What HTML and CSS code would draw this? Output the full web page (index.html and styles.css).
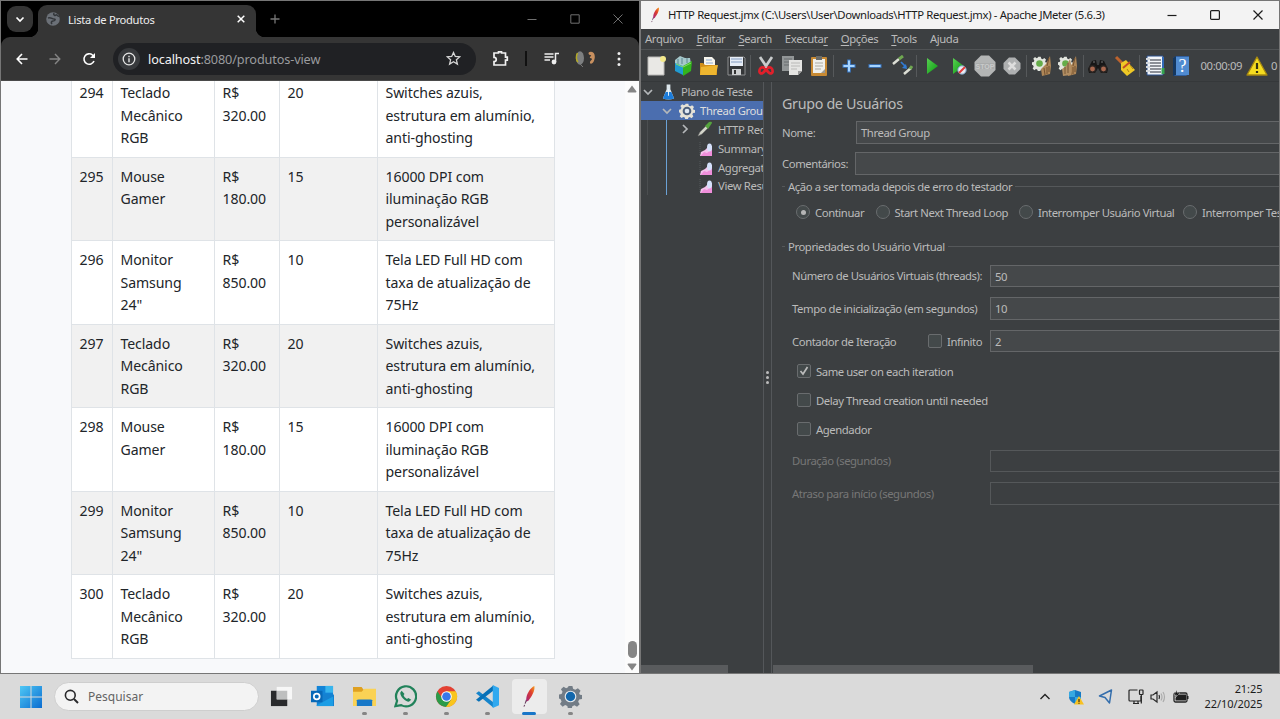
FILE: index.html
```html
<!DOCTYPE html>
<html lang="pt-BR">
<head>
<meta charset="utf-8">
<title>Lista de Produtos</title>
<link rel="stylesheet" href="styles.css">
</head>
<body>
<svg class="defs" width="0" height="0" aria-hidden="true">
  <defs>
    <linearGradient id="gWin" x1="0" y1="0" x2="1" y2="1"><stop offset="0" stop-color="#4fc8f5"/><stop offset="1" stop-color="#0a6cd0"/></linearGradient>
    <linearGradient id="gPlay" x1="0" y1="0" x2="1" y2="1"><stop offset="0" stop-color="#58d052"/><stop offset="1" stop-color="#0a9a10"/></linearGradient>
    <linearGradient id="gFeather" x1="1" y1="0" x2="0" y2="1"><stop offset="0" stop-color="#f4a020"/><stop offset=".4" stop-color="#e0402c"/><stop offset="1" stop-color="#a02080"/></linearGradient>
    <symbol id="feather" viewBox="0 0 20 26"><path d="M15.500 1C11 3 7.500 9 6.500 14l-.5 5 3-1.500C12 13 16.500 7 15.500 1z" fill="url(#gFeather)"/><path d="M6.500 17 5 21M4.500 22.500l-.8 2" stroke="#684060" stroke-width="1.200"/></symbol>
    <symbol id="gear" viewBox="0 0 24 24"><path d="M10 1h4l.7 3 2.300 1 2.700-1.700 2.800 2.800L21 8.500l.8 1.700 2.200.3v4l-3 .6-1 2.300 1.600 2.600-2.800 2.800-2.600-1.700-2.300 1-.6 2.400h-4l-.6-2.600-2.300-1-2.600 1.700L1 19.800l1.700-2.600-1-2.300L0 14v-4l2.700-.6 1-2.300L2 4.500l2.800-2.800 2.600 1.700 2-1z"/></symbol>
    <symbol id="graph" viewBox="0 0 14 15"><path d="M1 0v14" stroke="#555a5d" stroke-dasharray="1 1"/><path d="M1 14l1-4 4-2 4-4 3 0v10z" fill="#f3c4ec"/><path d="M1.500 14 5 10l3 1 5-4v7z" fill="#f08fdb"/><ellipse cx="10.500" cy="5.500" rx="2.500" ry="4" fill="#d5e1fb"/></symbol>
    <symbol id="broomgear" viewBox="0 0 22 22"><use href="#gear" x="1" y="1" width="15" height="15" fill="#e3e6df"/><circle cx="8.500" cy="8.500" r="3.300" fill="#65ad49"/><path d="M19 1 15 9l-5 5 1 7 8-2 1-8z" fill="#ae8657"/><path d="M18 3l-2 8m-3 2 1 7m2-8v7m2-8v6" stroke="#725131" fill="none"/></symbol>
  </defs>
</svg>

<main class="desktop">
  <section class="window browser">
    <header class="tabstrip">
      <div class="tab-search"><svg width="10" height="7" viewBox="0 0 10 7"><path d="M1.500 1.500 5 5l3.500-3.500" fill="none" stroke="#fff" stroke-width="1.700"/></svg></div>
      <div class="tab">
        <svg width="14" height="14" viewBox="0 0 14 14"><circle cx="7" cy="7" r="6.800" fill="#6b7077"/><path d="M2 6c3-1 4 1 6 1s1 2-1 2-2 2-1 3M8 1c-1 2 1 3 2 2s2 2 3 1" fill="none" stroke="#34373b" stroke-width="1.600"/></svg>
        <span class="tab-title">Lista de Produtos</span>
        <svg width="8" height="8" viewBox="0 0 8 8"><path d="M.7.700l6.600 6.600M7.300.7.700 7.300" stroke="#fff" stroke-width="1.500"/></svg>
      </div>
      <svg class="newtab" width="10" height="10" viewBox="0 0 10 10"><path d="M5 .5v9M.5 5h9" stroke="#777" stroke-width="1.300"/></svg>
      <div class="caption dim">
        <svg width="10" height="10" viewBox="0 0 10 10"><path d="M.5 5.500h9"/></svg>
        <svg width="10" height="10" viewBox="0 0 10 10"><path d="M.8.800h8.400v8.400H.8z"/></svg>
        <svg width="10" height="10" viewBox="0 0 10 10"><path d="m.5.500 9 9m0-9-9 9"/></svg>
      </div>
    </header>
    <div class="navbar">
      <svg width="12" height="12" viewBox="0 0 12 12"><path d="M11.500 6H1.500M6 1 1.200 6 6 11" fill="none" stroke="#fff" stroke-width="1.600"/></svg>
      <svg width="12" height="12" viewBox="0 0 12 12"><path d="M.5 6h10M6 1l4.800 5L6 11" fill="none" stroke="#858585" stroke-width="1.400"/></svg>
      <svg width="14" height="14" viewBox="0 0 14 14"><path d="M12 9A5.200 5.200 0 1 1 10.500 3l2 2" fill="none" stroke="#fff" stroke-width="1.600"/><path d="M13 1v5H8z" fill="#fff"/></svg>
      <div class="address">
        <span class="site-info"><svg width="14" height="14" viewBox="0 0 14 14"><circle cx="7" cy="7" r="5.800" fill="none" stroke="#e5e5e5" stroke-width="1.300"/><path d="M7 6.200v4M7 3.800v1.400" stroke="#e5e5e5" stroke-width="1.400"/></svg></span>
        <span class="url"><b>localhost</b>:8080/produtos-view</span>
        <svg width="15" height="15" viewBox="0 0 15 15"><path d="m7.500 1.500 1.800 4 4.400.4-3.300 2.900 1 4.300-3.900-2.300-3.900 2.300 1-4.300L1.300 5.900l4.400-.4z" fill="none" stroke="#d5d5d5" stroke-width="1.300"/></svg>
      </div>
      <div class="extensions">
        <svg width="17" height="17" viewBox="0 0 17 17"><path d="M2 3h4.500V1.800h3V3h4v4.200h1.800v3h-1.800V15H2v-3.500c3 0 3-4.200 0-4.200z" fill="none" stroke="#f1f1f1" stroke-width="1.700"/></svg>
        <i class="bar"></i>
        <svg width="15" height="13" viewBox="0 0 15 13"><path d="M.5 2h9M.5 5h9M.5 8h5.500M11.500 10V1.500H15" fill="none" stroke="#eee" stroke-width="1.500"/><circle cx="10" cy="10" r="2.400" fill="#eee"/></svg>
        <svg width="20" height="18" viewBox="0 0 20 18"><ellipse cx="5" cy="8" rx="4" ry="6.800" fill="#7d7f80"/><path d="M2.500 3C.8 6 1 10 3 12" stroke="#b4aa24" stroke-width="1.500" fill="none"/><path d="m5 14 3 3" stroke="#777"/><path d="M15 2c4-1 5.500 3 4.500 7-.5 4-4 6-4.500 4s2-3 2-4-3-.5-2-2 2-1.500 0-2-2-3 0-3z" fill="#c8905f"/></svg>
        <svg width="4" height="16" viewBox="0 0 4 16" fill="#eee"><circle cx="2" cy="2.500" r="1.500"/><circle cx="2" cy="8" r="1.500"/><circle cx="2" cy="13.500" r="1.500"/></svg>
      </div>
    </div>
    <div class="page">
      <table class="products">
        <colgroup><col class="c-id"><col class="c-name"><col class="c-price"><col class="c-qty"><col class="c-desc"></colgroup>
        <tr><td>294</td><td>Teclado<br>Mecânico<br>RGB</td><td>R$<br>320.00</td><td>20</td><td>Switches azuis,<br>estrutura em alumínio,<br>anti-ghosting</td></tr>
        <tr><td>295</td><td>Mouse<br>Gamer</td><td>R$<br>180.00</td><td>15</td><td>16000 DPI com<br>iluminação RGB<br>personalizável</td></tr>
        <tr><td>296</td><td>Monitor<br>Samsung<br>24"</td><td>R$<br>850.00</td><td>10</td><td>Tela LED Full HD com<br>taxa de atualização de<br>75Hz</td></tr>
        <tr><td>297</td><td>Teclado<br>Mecânico<br>RGB</td><td>R$<br>320.00</td><td>20</td><td>Switches azuis,<br>estrutura em alumínio,<br>anti-ghosting</td></tr>
        <tr><td>298</td><td>Mouse<br>Gamer</td><td>R$<br>180.00</td><td>15</td><td>16000 DPI com<br>iluminação RGB<br>personalizável</td></tr>
        <tr><td>299</td><td>Monitor<br>Samsung<br>24"</td><td>R$<br>850.00</td><td>10</td><td>Tela LED Full HD com<br>taxa de atualização de<br>75Hz</td></tr>
        <tr><td>300</td><td>Teclado<br>Mecânico<br>RGB</td><td>R$<br>320.00</td><td>20</td><td>Switches azuis,<br>estrutura em alumínio,<br>anti-ghosting</td></tr>
      </table>
      <div class="scrollbar">
        <svg width="10" height="8" viewBox="0 0 10 8"><path d="M5 .5 9.500 6.500Q9.500 7.500 8.500 7.500h-7Q.5 7.500.5 6.500z" fill="#858585"/></svg>
        <i class="thumb"></i>
        <svg width="10" height="8" viewBox="0 0 10 8"><path d="M5 7.500 9.500 1.500Q9.500.5 8.500.5h-7Q.5.500.5 1.500z" fill="#858585"/></svg>
      </div>
    </div>
  </section>

  <section class="window jmeter">
    <header class="titlebar">
      <svg width="13" height="16"><use href="#feather" width="13" height="16"/></svg>
      <span class="title">HTTP Request.jmx (C:\Users\User\Downloads\HTTP Request.jmx) - Apache JMeter (5.6.3)</span>
      <div class="caption">
        <svg width="10" height="10" viewBox="0 0 10 10"><path d="M.5 5.500h9"/></svg>
        <svg width="10" height="10" viewBox="0 0 10 10"><rect x=".6" y=".6" width="8.800" height="8.800" rx="1"/></svg>
        <svg width="10" height="10" viewBox="0 0 10 10"><path d="m.5.500 9 9m0-9-9 9"/></svg>
      </div>
    </header>
    <nav class="menu"><span>Arquivo</span><span><u>E</u>ditar</span><span><u>S</u>earch</span><span>Executa<u>r</u></span><span><u>O</u>pções</span><span><u>T</u>ools</span><span>Ajuda</span></nav>
    <div class="toolbar">
      <svg viewBox="0 0 22 22"><path d="M3 2h16v18H3z" fill="#e9e8e5" stroke="#b9b9b7"/><circle cx="18" cy="4" r="3" fill="#f3e98b"/></svg>
      <svg viewBox="0 0 22 22"><path d="m3 5 5-4 5 2 5 0 1 6-8 4-8-4z" fill="#a6c8cb"/><path d="M6 4v5m4-6v6m5-6v5" stroke="#5c8590"/><path d="m3 8 8 3v9l-8-4z" fill="#219bd2"/><path d="m11 11 9-5-1 10-8 5z" fill="#33b51d"/><path d="m4 9 7 3 8-4" stroke="#87de62" fill="none"/></svg>
      <svg viewBox="0 0 22 22"><path d="M6 2h8l3 3v9H6z" fill="#f7f5ed"/><path d="M8 5h6M8 8h7" stroke="#8cabd2"/><path d="M2 8h3l2 2h12v10H2z" fill="#d18e18"/><path d="m3 12 17-2-2 10H2z" fill="#edb52f"/></svg>
      <svg viewBox="0 0 22 22"><path d="M3 2h16l1 1v17H3z" fill="#343638" stroke="#8e9091"/><path d="M5 2h13v9H5z" fill="#e7edf6"/><path d="M6 4h11M6 7h11" stroke="#829bc0"/><path d="M7 14h9v6H7z" fill="#cdcfd0"/><path d="M9 15h2v4H9z" fill="#333"/></svg>
      <i class="sep"></i>
      <svg viewBox="0 0 22 22"><path d="M5 2 13 14M17 2 9 14" stroke="#c9cccd" stroke-width="2.700"/><path d="M10 13c-4-2-6 1-5.500 4s6 1 6-4M12 13c4-2 6 1 5.500 4s-6 1-6-4" fill="none" stroke="#e2202b" stroke-width="2.700"/></svg>
      <svg viewBox="0 0 22 22"><path d="M1 1h12v15H1z" fill="#929697"/><path d="M3 4h8M3 7h7M3 10h6" stroke="#686d6f"/><path d="M8 5h13v11l-4 4H8z" fill="#e5e5e3"/><path d="M10 8h9m-9 3h9m-9 3h6" stroke="#b9b9b7"/><path d="M21 16h-4v4z" fill="#999"/></svg>
      <svg viewBox="0 0 22 22"><rect x="3" y="2" width="16" height="19" rx="1" fill="#c88a33"/><path d="M5 4h12v14H5z" fill="#f0f0ec"/><path d="M8 1h6v4H8z" fill="#696b69"/><path d="M7 8h8m-8 3h8m-8 3h6" stroke="#acaaa2"/><path d="m13 18 4-4v4z" fill="#9b9a94"/></svg>
      <i class="sep"></i>
      <svg viewBox="0 0 22 22"><path d="M11 4.500v13M4.500 11h13" stroke="#3978c6" stroke-width="3.600"/><path d="M11 5.500v11M5.500 11h11" stroke="#a5d4ff" stroke-width="2"/></svg>
      <svg viewBox="0 0 22 22"><path d="M4.500 11h13" stroke="#3978c6" stroke-width="3.600"/><path d="M5.500 11h11" stroke="#a5d4ff" stroke-width="2"/></svg>
      <svg viewBox="0 0 22 22"><path d="m2 9 6-5m5 15 7-6" stroke="#dcded5" stroke-width="2.500"/><path d="m8 4 4-3m7 13 2-3" stroke="#6fa751" stroke-width="3"/><path d="m10 7 5 5" stroke="#317bd4" stroke-width="1.700"/><path d="m15 9 1 5-5-1z" fill="#317bd4"/></svg>
      <i class="sep"></i>
      <svg viewBox="0 0 22 22"><path d="M6 3v16l11-8z" fill="url(#gPlay)"/></svg>
      <svg viewBox="0 0 22 22"><path d="M5 3v16l11-8z" fill="url(#gPlay)"/><circle cx="14" cy="15" r="4.200" fill="#e7edf3" stroke="#799abf"/><path d="m11 18 6-6" stroke="#e13c3c" stroke-width="2"/></svg>
      <svg viewBox="0 0 22 22"><path d="M7 .5h8L21.500 7v8L15 21.500H7L.5 15V7z" fill="#b3b5b5"/><path d="M2 11h18" stroke="#a9abab" stroke-width="6"/><text x="11" y="13.500" class="stop">STOP</text></svg>
      <svg viewBox="0 0 22 22"><path d="M8 2.500h6l5.500 5.500v6L14 19.500H8L2.500 14V8z" fill="#aeb0b1"/><path d="m7.500 7.500 7 7m0-7-7 7" stroke="#ddd" stroke-width="2.500"/></svg>
      <i class="sep"></i>
      <svg viewBox="0 0 22 22"><use href="#broomgear" width="22" height="22"/></svg>
      <svg viewBox="0 0 22 22"><use href="#broomgear" width="22" height="22"/><path d="m13 4-4 7-4 3 1 7 8-1V9z" fill="#b18d62"/><path d="M11 8v10m-3-6v7" stroke="#755737"/></svg>
      <i class="sep"></i>
      <svg viewBox="0 0 22 22"><path d="m5 6 4-1 1 5h2l1-5 4 1 4 8-1 4h-6l-3-5-3 5H2l-1-4z" fill="#171717"/><circle cx="5.500" cy="14" r="3.200" fill="#a9684f" stroke="#282321" stroke-width="1.500"/><circle cx="16.500" cy="14" r="3.200" fill="#a9684f" stroke="#282321" stroke-width="1.500"/><path d="m6 7 2 0m6 0h2" stroke="#777"/></svg>
      <svg viewBox="0 0 22 22"><path d="m2 2 7 7" stroke="#bc632e" stroke-width="3"/><path d="m7 8 5-3 9 10-8 6-6-6z" fill="#efc926"/><path d="m9 13 7-6" stroke="#c54d25" stroke-width="2"/><path d="m13 14 2 3m1-7 3 4" stroke="#ab8014"/></svg>
      <i class="sep"></i>
      <svg viewBox="0 0 22 22"><path d="M3 1h16v19H3z" fill="#f2f5f9" stroke="#2a518d"/><path d="M6 5h11M6 8h11M6 11h11M6 14h11M6 17h11" stroke="#262d38" stroke-width="1.200"/><path d="M2 4h4M2 8h4M2 12h4M2 16h4" stroke="#d4d9de" stroke-width="2"/><path d="M19 2v11" stroke="#3269b7" stroke-width="2"/><path d="M19 13v6" stroke="#34a350" stroke-width="3"/></svg>
      <svg viewBox="0 0 22 22"><path d="M3 3 6 1h13v18l-3 2H3z" fill="#315f9f"/><path d="M6 2h13v18H6z" fill="#508bd0"/><path d="M3 3 6 1v19l-3 1z" fill="#15375f"/><text x="12.500" y="17" class="help">?</text></svg>
      <span class="timer">00:00:09</span>
      <svg class="warn" viewBox="0 0 22 22"><path d="M11 2 21 20H1z" fill="#f5dc20" stroke="#a68811" stroke-width="1.300" stroke-linejoin="round"/><path d="M11 8v6m0 2v2" stroke="#343212" stroke-width="2.200"/></svg>
      <span class="count">0</span>
    </div>
    <div class="workspace">
      <aside class="tree">
        <div class="node l0"><svg class="arrow" viewBox="0 0 10 10"><path d="m1 3 4 4 4-4"/></svg><svg class="ico" viewBox="0 0 16 16"><path d="M6 0h4v5l4 10q-6 2-12 0L6 5z" fill="#dce6ec"/><path d="m5 8h6l3 7q-6 2-12 0z" fill="#1c7cd9"/><path d="m8 5v7" stroke="#eaf5ff"/></svg><span>Plano de Teste</span></div>
        <div class="node l1 selected"><svg class="arrow" viewBox="0 0 10 10"><path d="m1 3 4 4 4-4"/></svg><svg class="ico" viewBox="0 0 24 24"><use href="#gear" width="24" height="24" fill="#e5e2d7"/><circle cx="12" cy="12" r="5" fill="#dfe8f3" stroke="#4d607d" stroke-width="3"/></svg><span>Thread Group</span></div>
        <div class="branch">
          <div class="node l2"><svg class="arrow" viewBox="0 0 10 10"><path d="m3 1 4 4-4 4"/></svg><svg class="ico" viewBox="0 0 16 16"><path d="M1 15 3 11 10 4l2 2-7 7z" fill="#d3d5ca" stroke="#777" stroke-width=".5"/><path d="m8 5 4-4q3-1 3 1L11 8z" fill="#55a43d"/></svg><span>HTTP Request</span></div>
          <div class="node l2"><svg class="graph"><use href="#graph" width="14" height="15"/></svg><span>Summary Report</span></div>
          <div class="node l2"><svg class="graph"><use href="#graph" width="14" height="15"/></svg><span>Aggregate Report</span></div>
          <div class="node l2"><svg class="graph"><use href="#graph" width="14" height="15"/></svg><span>View Results Tree</span></div>
        </div>
        <i class="hscroll"></i>
      </aside>
      <div class="splitter"><i></i><i></i><i></i></div>
      <div class="form">
        <h1>Grupo de Usuários</h1>
        <div class="row name"><label>Nome:</label><div class="field">Thread Group</div></div>
        <div class="row comments"><label>Comentários:</label><div class="field"></div></div>
        <div class="legend"><span class="lg1">Ação a ser tomada depois de erro do testador</span></div>
        <div class="radios">
          <span class="r1"><i class="radio on"></i>Continuar</span><span class="r2"><i class="radio"></i>Start Next Thread Loop</span><span class="r3"><i class="radio"></i>Interromper Usuário Virtual</span><span><i class="radio"></i>Interromper Teste</span>
        </div>
        <div class="legend second"><span>Propriedades do Usuário Virtual</span></div>
        <div class="row prop"><label>Número de Usuários Virtuais (threads):</label><div class="field">50</div></div>
        <div class="row prop"><label>Tempo de inicialização (em segundos)</label><div class="field">10</div></div>
        <div class="row prop"><label>Contador de Iteração</label><span class="infinite"><i class="check"></i>Infinito</span><div class="field">2</div></div>
        <div class="option"><i class="check"><svg viewBox="0 0 12 12"><path d="m2.500 6 2.500 3 4.500-7"/></svg></i>Same user on each iteration</div>
        <div class="option"><i class="check"></i>Delay Thread creation until needed</div>
        <div class="option"><i class="check"></i>Agendador</div>
        <div class="row prop off first-off"><label>Duração (segundos)</label><div class="field"></div></div>
        <div class="row prop off"><label>Atraso para início (segundos)</label><div class="field"></div></div>
        <i class="hscroll"></i>
      </div>
    </div>
  </section>
</main>

<footer class="taskbar">
  <svg class="start" width="22" height="22" viewBox="0 0 22 22" fill="url(#gWin)"><path d="M0 0h10.500v10.500H0zM11.500 0H22v10.500H11.500zM0 11.500h10.500V22H0zM11.500 11.500H22V22H11.500z"/></svg>
  <div class="search"><svg width="15" height="15" viewBox="0 0 15 15"><circle cx="6.300" cy="6.300" r="4.900" fill="none" stroke="#29292b" stroke-width="1.600"/><path d="m10 10 4 4" stroke="#29292b" stroke-width="1.900"/></svg><span>Pesquisar</span></div>
  <div class="apps">
    <div class="app"><svg viewBox="0 0 24 24"><path d="M1 6h17v16H1z" fill="#292a2c"/><path d="M7 2h16v13H7z" fill="#f7f7f7"/><path d="M7 6h11v9H7z" fill="#bebfbf"/></svg></div>
    <div class="app"><svg viewBox="0 0 24 24"><path d="M6 1h17v10H6z" fill="#1384d7"/><path d="M15 1h8v7h-8z" fill="#38b5ed"/><path d="M6 10h18v12H6z" fill="#1581d0"/><path d="m6 21 17-9v10H6z" fill="#1c9de5"/><path d="M0 6h12v12H0z" fill="#0869b8"/><circle cx="6" cy="12" r="3" fill="none" stroke="#fff" stroke-width="1.800"/></svg></div>
    <div class="app run"><svg viewBox="0 0 24 24"><path d="M0 2h9l2 3h12v17H0z" fill="#dfa021"/><path d="M0 7h9l3-3h12v18H0z" fill="#fad255"/><path d="M4 22v-6q0-1 2-1h12q2 0 2 1v6z" fill="#1878c8"/></svg></div>
    <div class="app run"><svg viewBox="0 0 24 24"><path d="m1.500 22 1.700-5.500A10.500 10.500 0 1 1 7.500 21z" fill="none" stroke="#21825a" stroke-width="2.300"/><path d="M8 6 6.500 8c0 4 5 9 9 9.500l2.500-2-3-2-1.500 1c-2-1-3-2-3.500-4l1-1z" fill="#21825a"/></svg></div>
    <div class="app run"><svg viewBox="0 0 24 24"><circle cx="12" cy="12" r="11" fill="#e34133"/><path d="M2.500 6.500A11 11 0 0 0 12 23l5-8-7.800 1.500z" fill="#2b9b49"/><path d="M12 6.500h9.600A11 11 0 0 1 11.500 23L17 15z" fill="#f9c51d"/><circle cx="12" cy="12" r="5.500" fill="#fff"/><circle cx="12" cy="12" r="4.500" fill="#3978ea"/></svg></div>
    <div class="app run"><svg viewBox="0 0 24 24"><path d="M0 8.500 3 6.500 18 18v5.500z" fill="#1584cb"/><path d="M0 15.500 3 17.500 18 6V.5z" fill="#0871b7"/><path d="m17.500 0 6.500 3v18l-6.500 3z" fill="#31a9ef"/></svg></div>
    <div class="app active"><svg viewBox="0 0 24 24"><use href="#feather" width="24" height="24"/></svg></div>
    <div class="app run"><svg viewBox="0 0 24 24"><use href="#gear" width="24" height="24" fill="#727c86"/><circle cx="12" cy="12" r="5.500" fill="#1267ac" stroke="#e3e8ed" stroke-width="1.200"/></svg></div>
  </div>
  <div class="tray">
    <svg class="t1" width="12" height="8" viewBox="0 0 12 8"><path d="m1.500 6 4.500-4.500L10.500 6" fill="none" stroke="#222" stroke-width="1.400"/></svg>
    <svg class="t2" width="16" height="16" viewBox="0 0 16 16"><path d="M7 1 13 3v5q0 4-6 7-6-3-6-7V3z" fill="#167ac5"/><path d="M7 1v7H1V3zM7 8h6q0 4-6 7z" fill="#36a9e1"/><path d="m11 7 5 8.500H6z" fill="#f8c121"/><path d="M11 10v3m0 .7v1" stroke="#373017" stroke-width="1.200"/></svg>
    <svg class="t3" width="15" height="15" viewBox="0 0 15 15"><path d="M13.500 1 1.500 7l5.500 1.500L11.500 14z" fill="none" stroke="#346eac" stroke-width="1.500" stroke-linejoin="round"/></svg>
    <svg class="t4" width="16" height="16" viewBox="0 0 16 16" fill="none" stroke="#252525" stroke-width="1.200"><path d="M9.500 1H2Q1 1 1 2v9q0 1 1 1h11V7M5 14.500h6M6 12v2m4-2v2"/><rect x="11.500" y="1" width="3.500" height="4.500" rx=".5"/><path d="M13.300 5.500v9"/></svg>
    <svg class="t5" width="16" height="14" viewBox="0 0 16 14" fill="none" stroke="#292929" stroke-width="1.200"><path d="M1 5h2l4-3v10L3 9H1zM9 5q1 2 0 4"/><path d="M11 3.500q2 3.500 0 7M13 2q3 5 0 10" stroke="#acacac"/></svg>
    <svg class="t6" width="16" height="13" viewBox="0 0 16 13"><rect x="1" y="3" width="13" height="9" rx="1.500" fill="none" stroke="#252525" stroke-width="1.300"/><path d="M2.500 4.500H13v6H2.500zM14 6h1.500v3H14z" fill="#202020"/><path d="M4 0 1 5h3L2 8l5-5H4z" fill="#111" stroke="#ddd" stroke-width=".4"/></svg>
    <div class="clock"><span>21:25</span><span>22/10/2025</span></div>
  </div>
</footer>
</body>
</html>
```

FILE: styles.css
```css
* { box-sizing: border-box; }
body { margin: 0; width: 1280px; height: 719px; overflow: hidden; display: grid; grid-template-rows: 674px 45px; font-family: "Noto Sans", "Open Sans", sans-serif; background: #dadada; }
svg { display: block; flex: none; }
.defs { position: absolute; }
i { display: block; flex: none; }
.desktop { display: grid; grid-template-columns: 640px 640px; min-height: 0; }
.window { border: 1px solid #767676; overflow: hidden; display: flex; flex-direction: column; min-width: 0; }

/* browser */
.browser { background: #000; }
.tabstrip { height: 36px; flex: none; display: flex; align-items: center; padding-left: 6px; }
.tab-search { width: 26px; height: 26px; border-radius: 9px; background: #353535; display: grid; place-items: center; }
.tab { width: 218px; height: 32px; align-self: flex-end; margin-left: 5px; background: #353535; border-radius: 9px 9px 0 0; display: flex; align-items: center; padding: 0 11px 4px 8px; gap: 8px; position: relative; }
.tab::before, .tab::after { content: ""; position: absolute; bottom: 0; width: 9px; height: 9px; }
.tab::before { left: -9px; background: radial-gradient(circle at 0 0, transparent 9px, #353535 9.500px); }
.tab::after { right: -9px; background: radial-gradient(circle at 100% 0, transparent 9px, #353535 9.500px); }
.tab-title { flex: 1; color: #eee; font-size: 11.200px; letter-spacing: -.28px; white-space: nowrap; }
.newtab { margin-left: 14px; }
.caption { margin-left: auto; display: flex; gap: 33px; padding-right: 16px; fill: none; stroke: #1c1c1c; stroke-width: 1.200; }
.caption.dim { stroke: #707070; stroke-width: 1; }
.navbar { height: 44px; flex: none; background: #353535; border-radius: 9px 9px 0 0; border-bottom: 1px solid #4a4a4a; display: flex; align-items: center; padding-left: 15px; gap: 21px; }
.address { width: 363px; height: 32px; margin-left: -4px; border-radius: 16px; background: #202124; display: flex; align-items: center; padding: 0 15px 0 5px; }
.site-info { width: 22px; height: 22px; border-radius: 50%; background: #383a3d; display: grid; place-items: center; }
.url { flex: 1; margin-left: 8px; font-size: 12.700px; letter-spacing: -.13px; color: #9a9b9e; }
.url b { font-weight: 400; color: #f3f3f3; }
.extensions { display: flex; align-items: center; margin-left: -5px; }
.bar { width: 2px; height: 15px; background: #111; margin: 0 17px 0 16px; }
.extensions svg:nth-of-type(3) { margin-left: 16px; }
.extensions svg:nth-of-type(4) { margin-left: 22px; }
.page { flex: 1; min-height: 0; overflow: hidden; background: #f8f9fb; display: flex; justify-content: space-between; }
.products { border-collapse: collapse; table-layout: fixed; width: 483px; height: 583.500px; margin: -8px 0 0 70px; background: #fff; font-size: 14.100px; letter-spacing: -.1px; line-height: 22.500px; color: #212529; flex: none; }
.products tr { height: 83.300px; }
.products tr:nth-child(even) { background: #f1f1f1; }
.products td { border: 1px solid #dfe3e7; padding: 8px 7.500px 7px; vertical-align: top; white-space: nowrap; }
.c-id { width: 41px; } .c-name { width: 102px; } .c-price { width: 65px; } .c-qty { width: 98px; } .c-desc { width: 177px; }
.scrollbar { width: 14px; background: #fcfcfc; display: flex; flex-direction: column; align-items: center; padding: 4px 0 2px; }
.thumb { width: 9px; height: 17px; border-radius: 5px; background: #858585; margin: auto 0 5px; }

/* JMeter window */
.jmeter { background: #3c3f41; color: #bbb; font-size: 11.300px; letter-spacing: -.42px; }
.titlebar { height: 28px; flex: none; background: #f3f3f3; color: #1b1b1b; display: flex; align-items: center; padding-left: 8px; }
.title { margin: -2px 0 0 6px; font-size: 11.300px; letter-spacing: -.35px; white-space: nowrap; }
.menu { height: 21px; flex: none; display: flex; align-items: center; gap: 13px; padding: 0 0 2px 4px; border-bottom: 1px solid #505355; letter-spacing: -.38px; }
.menu u { text-underline-offset: 2px; }
.toolbar { height: 32px; flex: none; display: flex; align-items: center; padding-left: 2px; border-bottom: 1px solid #35383a; white-space: nowrap; }
.toolbar svg { width: 22px; height: 22px; margin: 0 2.250px; }
.sep { width: 1px; height: 22px; margin: 0 1.300px; background: #56595b; }
.stop { font: bold 7px "Liberation Sans", sans-serif; letter-spacing: 0; fill: #c8caca; text-anchor: middle; }
.help { font: 18px "Liberation Serif", serif; letter-spacing: 0; fill: #fff; text-anchor: middle; }
.timer { width: 41px; margin-left: 6px; }
.toolbar .warn { margin: 0 3.500px 0 4px; }
.workspace { flex: 1; min-height: 0; display: grid; grid-template-columns: 122px 9px 1fr; }
.tree { min-width: 0; overflow: hidden; display: flex; flex-direction: column; padding-top: .5px; letter-spacing: -.38px; }
.node { height: 18.800px; display: flex; align-items: center; white-space: nowrap; flex: none; }
.arrow { width: 10px; height: 10px; fill: none; stroke: #b5b8ba; stroke-width: 1.700; }
.ico { width: 16px; height: 16px; }
.node .ico { margin: 0 5px 0 7px; }
.l0 { padding-left: 2px; } .l1 { padding-left: 21px; }
.node.l0 .ico { width: 15px; height: 16px; margin-left: 8px; }
.selected { background: #4b6eaf; color: #ddd; }
.branch { margin-left: 6px; border-left: 1px solid #4b4e50; padding-left: 18px; }
.branch .node { border-left: 1px solid #6ba2d6; padding-left: 13px; }
.graph { width: 14px; height: 15px; margin: 2px 5px 0 19px; }
.hscroll { height: 8px; background: #595b5d; margin-top: auto; width: 87px; }
.splitter { border: 1px solid #54575a; border-width: 0 1px; display: flex; flex-direction: column; justify-content: center; align-items: center; gap: 2px; }
.splitter i { width: 3px; height: 3px; border-radius: 50%; background: #bbb; }
.form { min-width: 0; overflow: hidden; display: flex; flex-direction: column; padding-left: 10px; white-space: nowrap; }
.form h1 { height: 39px; margin: 0; font-size: 14.300px; font-weight: 400; letter-spacing: -.32px; line-height: 43px; flex: none; }
.row { display: flex; align-items: center; flex: none; }
.field { flex: 1; height: 22.500px; border: 1px solid #646668; border-right: 0; background: #45484a; padding-left: 4px; line-height: 21px; }
.name label { width: 74px; } .comments label { width: 73px; }
.comments { margin-top: 8.500px; }
.legend { height: 24px; display: flex; align-items: center; gap: 3px; flex: none; }
.legend::before { content: ""; width: 3px; height: 1px; background: #55585a; }
.legend::after { content: ""; flex: 1; height: 1px; background: #55585a; }
.radios { height: 27px; display: flex; align-items: center; padding-left: 14px; flex: none; }
.radios span { display: flex; align-items: center; gap: 5px; flex: none; }
.r1 { width: 79.500px; } .r2 { width: 143.500px; } .radios .r3 { width: 164px; }
.radio { width: 14px; height: 14px; border: 1px solid #696c6e; border-radius: 50%; background: #43494a; display: grid; place-items: center; }
.on::after { content: ""; width: 5px; height: 5px; border-radius: 50%; background: #b5b5b5; }
.legend.second { height: 21px; margin: 10px 0 3px; }
.prop { height: 32.700px; padding-left: 10px; }
.prop label { width: 198px; }
.prop:has(.infinite) label { width: 136px; }
.infinite { width: 62px; display: flex; align-items: center; gap: 5px; }
.check { width: 14px; height: 14px; border: 1px solid #696c6e; border-radius: 2px; background: #43494a; }
.check svg { width: 12px; height: 12px; fill: none; stroke: #bbb; stroke-width: 1.700; }
.option { height: 29px; display: flex; align-items: center; padding: 0 0 2px 15px; gap: 5px; flex: none; }
.off { color: #777; }
.off .field { background: #3c3f41; border-color: #55585a; }
.form .hscroll { width: 260px; margin-left: -9px; }

/* taskbar */
.taskbar { background: #dadada; display: flex; align-items: center; padding-left: 20px; }
.search { width: 205px; height: 29px; margin-left: 12px; border-radius: 15px; background: #f3f3f3; border: 1px solid #cecece; display: flex; align-items: center; padding-left: 9px; gap: 9px; color: #646464; font-size: 12px; }
.apps { display: flex; margin-left: 2px; padding-left: 3px; gap: 6.250px; }
.app { width: 35px; height: 35px; border-radius: 4px; display: grid; place-items: center; position: relative; }
.app svg { width: 23px; height: 23px; }
.run::after, .active::after { content: ""; position: absolute; bottom: -1px; left: 15px; width: 5px; height: 3px; border-radius: 2px; background: #858585; }
.active { background: #ececec; }
.active::after { left: 10.500px; width: 14px; background: #1876c8; }
.tray { margin-left: auto; display: flex; align-items: center; padding-right: 17.500px; }
.t2 { margin-left: 17px; } .t3 { margin-left: 14px; } .t4 { margin-left: 15px; } .t5 { margin-left: 6px; } .t6 { margin-left: 7px; }
.clock { width: 74px; display: flex; flex-direction: column; align-items: flex-end; font-size: 11px; line-height: 15px; letter-spacing: -.05px; color: #1c1c1c; padding-bottom: 2px; }
```
